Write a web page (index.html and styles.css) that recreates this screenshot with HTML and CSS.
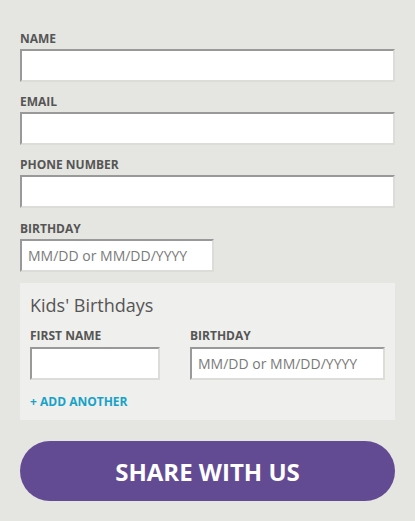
FILE: index.html
```html
<!DOCTYPE html>
<html lang="en">
<head>
<meta charset="utf-8">
<title>Share with us</title>
<link rel="stylesheet" href="styles.css">
</head>
<body>
<form class="form">
  <div class="field">
    <label class="label" for="name">NAME</label>
    <input class="input" id="name" type="text">
  </div>
  <div class="field">
    <label class="label" for="email">EMAIL</label>
    <input class="input" id="email" type="text">
  </div>
  <div class="field">
    <label class="label" for="phone">PHONE NUMBER</label>
    <input class="input" id="phone" type="text">
  </div>
  <div class="field field-last">
    <label class="label" for="bday">BIRTHDAY</label>
    <input class="input input-short" id="bday" type="text" placeholder="MM/DD or MM/DD/YYYY">
  </div>
  <div class="kids">
    <h2 class="kids-title">Kids' Birthdays</h2>
    <div class="kids-row">
      <div class="kid-field">
        <label class="label" for="kname">FIRST NAME</label>
        <input class="input" id="kname" type="text">
      </div>
      <div class="kid-field">
        <label class="label" for="kbday">BIRTHDAY</label>
        <input class="input" id="kbday" type="text" placeholder="MM/DD or MM/DD/YYYY">
      </div>
    </div>
    <a class="add-link" href="#">+ ADD ANOTHER</a>
  </div>
  <button class="submit" type="button">SHARE WITH US</button>
</form>
</body>
</html>
```
FILE: styles.css
```css
* { box-sizing: border-box; }
html, body {
  margin: 0;
  padding: 0;
  background: #e5e5e1;
  font-family: "Open Sans", "Liberation Sans", sans-serif;
}
.form {
  padding: 31px 20px 20px;
  display: flex;
  flex-direction: column;
}
.field {
  display: flex;
  flex-direction: column;
  margin-bottom: 12px;
}
.field-last {
  margin-top: 1px;
  margin-bottom: 11px;
}
.label {
  font-size: 12px;
  line-height: 16px;
  font-weight: 700;
  color: #555555;
  margin-bottom: 2px;
}
.input {
  display: block;
  width: 100%;
  height: 33px;
  margin: 0;
  padding: 0 6px;
  border-style: solid;
  border-width: 2px;
  border-color: #999999 #dcdcd9 #dcdcd9 #999999;
  background: #ffffff;
  font-family: "Open Sans", "Liberation Sans", sans-serif;
  font-size: 14px;
  color: #555555;
  outline: none;
  border-radius: 0;
}
.input::placeholder { color: #7a7a7a; }
.input-short { width: 194px; }
.kids {
  background: #efefed;
  padding: 10px 10px 10px;
}
.kids-title {
  margin: 0 0 11px;
  font-size: 18px;
  line-height: 24px;
  font-weight: 400;
  color: #555555;
}
.kids-row {
  display: grid;
  grid-template-columns: 130px 1fr;
  column-gap: 30px;
}
.kid-field {
  display: flex;
  flex-direction: column;
}
.kid-field .label { margin-bottom: 3px; }
.add-link {
  display: block;
  margin-top: 14px;
  font-size: 12px;
  line-height: 16px;
  font-weight: 700;
  color: #17a2c8;
  text-decoration: none;
}
.submit {
  margin-top: 21px;
  height: 60px;
  border: none;
  border-radius: 30px;
  background: #634b94;
  color: #ffffff;
  font-family: "Open Sans", "Liberation Sans", sans-serif;
  font-size: 24px;
  font-weight: 700;
  cursor: pointer;
}
```
